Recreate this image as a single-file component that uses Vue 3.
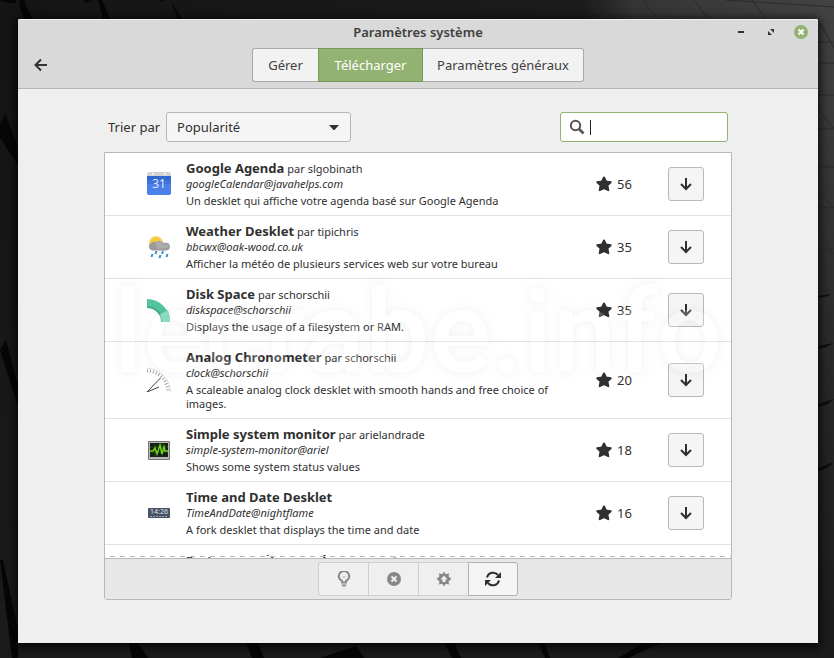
<script setup>
import { ref } from 'vue'

const tabs = [
  { label: 'Gérer', size: 'small' },
  { label: 'Télécharger', size: 'medium' },
  { label: 'Paramètres généraux', size: 'large' }
]
const activeTab = ref('Télécharger')
const sort = ref('Popularité')
const query = ref('')

const desklets = [
  { icon: 'calendar', name: 'Google Agenda', author: 'slgobinath', id: 'googleCalendar@javahelps.com', text: 'Un desklet qui affiche votre agenda basé sur Google Agenda', score: 56 },
  { icon: 'weather', name: 'Weather Desklet', author: 'tipichris', id: 'bbcwx@oak-wood.co.uk', text: 'Afficher la météo de plusieurs services web sur votre bureau', score: 35 },
  { icon: 'disk', name: 'Disk Space', author: 'schorschii', id: 'diskspace@schorschii', text: 'Displays the usage of a filesystem or RAM.', score: 35 },
  { icon: 'clock', name: 'Analog Chronometer', author: 'schorschii', id: 'clock@schorschii', text: 'A scaleable analog clock desklet with smooth hands and free choice of images.', score: 20 },
  { icon: 'monitor', name: 'Simple system monitor', author: 'arielandrade', id: 'simple-system-monitor@ariel', text: 'Shows some system status values', score: 18 },
  { icon: 'time', name: 'Time and Date Desklet', author: '', id: 'TimeAndDate@nightflame', text: 'A fork desklet that displays the time and date', score: 16 },
  { icon: '', name: 'System monitor graph', author: 'rcassani', id: 'system-monitor-graph@rcassani', text: 'Graphs for system variables', score: 15 }
]
</script>

<template>
  <div class="desktop">
    <svg class="wallpaper" viewBox="0 0 834 658" preserveAspectRatio="none" aria-hidden="true">
      <defs>
        <linearGradient id="sky" x1="0" y1="0" x2="1" y2="0">
          <stop offset="0" stop-color="#141414" />
          <stop offset="0.7" stop-color="#1b1b1b" />
          <stop offset="0.76" stop-color="#343434" />
          <stop offset="1" stop-color="#434343" />
        </linearGradient>
        <linearGradient id="fade" x1="0" y1="0" x2="0" y2="1">
          <stop offset="0" stop-color="#1a1a1a" stop-opacity="0" />
          <stop offset="0.6" stop-color="#1a1a1a" stop-opacity="0.7" />
          <stop offset="1" stop-color="#1b1b1b" />
        </linearGradient>
      </defs>
      <rect width="834" height="658" fill="url(#sky)" />
      <rect width="834" height="658" fill="url(#fade)" />
      <g fill="#060606">
        <path d="M0 0h16v3H8zM20 0h4l8 19h-8l-5-16zM84 0h8l-6 3zM98 0h4l8 19h-7zM160 0h5l-3 2zM171 2l11 17h-4z" />
        <path d="M0 124l5-10 18 44v14L0 138zM0 350l6-10 16 60v18zM0 560h3l15 70v28h-6z" />
        <path d="M128 640h8l12 18h-16zM245 640h12l7 18h-12zM320 658l36-12 8 12zM443 640h10l8 18h-9zM537 640h6l7 18h-5zM618 658l30-18h20l-40 18z" />
      </g>
      <g fill="#0d0d0d">
        <path d="M818 296l13-2-3 2-10 2zM818 346l16-3-8 4-8 2zM818 404l16-5-6 5-10 3zM818 468l16-6-7 6-9 3z" />
      </g>
      <g stroke="#2b2b2b" stroke-width="1" fill="none">
        <path d="M590 0l14 19M643 0l14 19M694 0l14 19M752 0l14 19M725 0l109 7M818 42h16M818 63h16M818 95h16M818 20l16 28M818 129h16M818 167h16M818 208l16-1M818 251l16-2M818 110l16 18M818 190l16 18M818 236l16 18" />
      </g>
    </svg>

    <main class="window">
      <header class="header">
        <div class="titlebar">
          <h1>Paramètres système</h1>
          <div class="controls">
            <button aria-label="Réduire">
              <svg width="14" height="14" viewBox="0 0 14 14"><path d="M4 6h6v2H4z" fill="#333" /></svg>
            </button>
            <button aria-label="Agrandir">
              <svg width="14" height="14" viewBox="0 0 14 14"><path d="M6 4h4v4zM4 6v4h4z" fill="#333" /><path d="M5 4l5 5" stroke="#d9d9d9" /></svg>
            </button>
            <button aria-label="Fermer">
              <svg width="14" height="14" viewBox="0 0 14 14"><circle cx="7" cy="7" r="7" fill="#92b372" /><path d="M4.500 4.500l5 5m0-5l-5 5" stroke="#fff" stroke-width="2" /></svg>
            </button>
          </div>
        </div>
        <div class="navbar">
          <button class="back" aria-label="Retour">
            <svg width="14" height="14" viewBox="0 0 14 14" fill="none" stroke="#333" stroke-width="2"><path d="M13 7H2M7 1.500L1.500 7 7 12.500" /></svg>
          </button>
          <nav class="tabs">
            <button
              v-for="tab in tabs"
              :key="tab.label"
              :class="[tab.size, { active: tab.label === activeTab }]"
              @click="activeTab = tab.label"
            >{{ tab.label }}</button>
          </nav>
        </div>
      </header>

      <section class="content">
        <div class="filters">
          <label for="sort">Trier par</label>
          <div class="picker">
            <select id="sort" v-model="sort">
              <option>Popularité</option>
              <option>Nom</option>
              <option>Date</option>
            </select>
            <svg class="chevron" width="10" height="6" viewBox="0 0 10 6"><path d="M0 0h10L5.500 5h-1z" fill="#303030" /></svg>
          </div>
          <label class="search">
            <svg width="16" height="16" viewBox="0 0 16 16" fill="none" stroke="#555"><circle cx="6.500" cy="6.500" r="4.700" stroke-width="2" /><path d="M10 10l4.500 4.500" stroke-width="2.600" /></svg>
            <span class="caret"></span>
            <input v-model="query" type="text" aria-label="Rechercher" />
          </label>
        </div>

        <div class="panel">
          <ul class="list">
            <li v-for="item in desklets" :key="item.id" class="row">
              <svg v-if="item.icon === 'calendar'" class="icon" viewBox="0 0 24 24">
                <rect y="0" width="24" height="8" rx="2" fill="#d2d4d4" />
                <path d="M5 1h2v2H5zM17 1h2v2h-2z" fill="#f4f4f4" />
                <path d="M0 4h24v17a2 2 0 0 1-2 2H2a2 2 0 0 1-2-2z" fill="#4a80e8" />
                <path d="M0 4h24v8H0z" fill="#3f72dc" />
                <path d="M0 4h24v4H0z" fill="#3367d0" />
                <text x="12" y="16" text-anchor="middle" font-size="12" fill="#dce8ff">31</text>
              </svg>
              <svg v-else-if="item.icon === 'weather'" class="icon" viewBox="0 0 24 24">
                <circle cx="9" cy="8" r="7" fill="#f6d878" />
                <circle cx="9" cy="8" r="6" fill="#f9cb38" />
                <path d="M5 15.500a4 4 0 0 1-1-7.500 5 5 0 0 1 5-1 6 6 0 0 1 8 1c4-1 6 1 6 3.500s-2 4-4 4z" fill="#9b9b9b" />
                <path d="M8 7c4-2 8 0 9 3 3-2 6-1 6 2-5 2-9 1-13 2z" fill="#ababab" />
                <path d="M9.500 16l-1 3M16 16l-1 3M5.500 19l-1 3M13.500 20l-1 3M20.500 19l-1 3" stroke="#3792c8" stroke-width="2" />
              </svg>
              <svg v-else-if="item.icon === 'disk'" class="icon" viewBox="0 0 24 24">
                <path d="M0 1a23 23 0 0 1 23 23h-8A15 15 0 0 0 0 9z" fill="#53c49d" />
                <path d="M0 8a16 16 0 0 1 16 16h-2A14 14 0 0 0 0 10z" fill="#41ac87" />
                <path d="M13 16l8-4a23 23 0 0 1 2 12h-8a15 15 0 0 0-2-8z" fill="#6ed0af" />
              </svg>
              <svg v-else-if="item.icon === 'clock'" class="icon" viewBox="0 0 24 24" fill="none">
                <path d="M0 .5A23.500 23.500 0 0 1 23.500 24" stroke="#ddd" stroke-width="1" />
                <path d="M0 3a21 21 0 0 1 21 21" stroke="#98a3a5" stroke-width="3" stroke-dasharray="1 2" />
                <path d="M0 24L13.500 10M0 24l12-5" stroke="#444" stroke-width="1" />
              </svg>
              <svg v-else-if="item.icon === 'monitor'" class="icon" viewBox="0 0 24 24">
                <rect x="1" y="3" width="22" height="19" rx="1" fill="#777" />
                <rect x="2" y="4" width="20" height="17" fill="#b9b9b5" />
                <rect x="3" y="5" width="18" height="14" fill="#142014" />
                <path d="M3 9h18M3 14h18M8 5v14M15 5v14" stroke="#254b1b" />
                <path d="M3 13h3l2-3 2 6 3-9 2 9 2-7 1 4h3" fill="none" stroke="#72d01c" stroke-width="1.500" />
              </svg>
              <svg v-else-if="item.icon === 'time'" class="icon" viewBox="0 0 24 24">
                <rect x="1" y="7" width="22" height="10" rx="1" fill="#465163" />
                <text x="12" y="13" text-anchor="middle" font-size="7" fill="#e2e5ea">14:26</text>
                <path d="M3 15.500h18" stroke="#a0a7b2" stroke-dasharray="2 1" stroke-width="1" />
              </svg>
              <span v-else class="icon"></span>

              <div class="info">
                <p class="heading"><strong>{{ item.name }}</strong><span v-if="item.author">par {{ item.author }}</span></p>
                <p class="uuid">{{ item.id }}</p>
                <p class="text">{{ item.text }}</p>
              </div>

              <div class="score">
                <svg width="16" height="16" viewBox="0 0 16 16"><path d="M8 1.500l2 4 4.700.7-3.300 3.200.9 4.800L8 12.200l-4.300 2 .9-4.800L1.300 6.200 6 5.500z" fill="#303030" stroke="#303030" stroke-width="2" stroke-linejoin="round" /></svg>
                <span>{{ item.score }}</span>
              </div>
              <button class="get" :aria-label="'Installer ' + item.name">
                <svg width="14" height="14" viewBox="0 0 14 14" fill="none" stroke="#303030" stroke-width="2"><path d="M7 1v11M2 7l5 5 5-5" /></svg>
              </button>
            </li>
          </ul>

          <div class="actions">
            <div class="group">
              <button disabled aria-label="À propos">
                <svg width="16" height="16" viewBox="0 0 16 16"><path d="M6 11.500V10a5.200 5.200 0 1 1 4 0v1.500z" fill="none" stroke="#888" stroke-width="2" /><path d="M6 5l2 3 2-3z" fill="#ccc" /><path d="M5.500 13.500h5l-1 2h-3z" fill="#888" /></svg>
              </button>
              <button disabled aria-label="Désinstaller">
                <svg width="16" height="16" viewBox="0 0 16 16"><circle cx="8" cy="8" r="7" fill="#888" /><path d="M5.500 5.500l5 5m0-5l-5 5" stroke="#f0f0f0" stroke-width="2" /></svg>
              </button>
              <button disabled aria-label="Mettre à jour">
                <svg width="16" height="16" viewBox="0 0 16 16"><path fill-rule="evenodd" d="M8 .5l1.700 2.700 3.400-1-.5 3.300L15.500 8l-2.900 2.200.5 3.400-3.400-.9L8 15.500l-1.700-2.800-3.400.9.5-3.400L.5 8l2.900-2.500-.5-3.300 3.400 1zM8 4.500L4.500 8.500h2v2.500h3V8.500h2z" fill="#888" /></svg>
              </button>
              <button class="refresh" aria-label="Actualiser">
                <svg width="18" height="16" viewBox="0 0 18 16" fill="none" stroke="#303030" stroke-width="2"><path d="M3 6.500A6.300 6.300 0 0 1 14 4M15 9.500A6.300 6.300 0 0 1 4 12" /><path d="M17 1v6h-6zM1 15V9h6z" fill="#303030" stroke="none" /></svg>
              </button>
            </div>
          </div>
        </div>
      </section>
      <div class="watermark">lecrabe.info</div>
    </main>
  </div>
</template>

<style>
body {
  margin: 0;
  background: #181818;
}
</style>

<style scoped>
* {
  box-sizing: border-box;
}
.desktop {
  position: relative;
  display: flex;
  height: 100vh;
  padding: 19px 16px 15px 18px;
  font-family: "Noto Sans", "Open Sans", sans-serif;
  font-size: 13px;
  line-height: 18px;
  color: #303030;
}
.wallpaper {
  position: absolute;
  inset: 0;
  width: 100%;
  height: 100%;
}
.window {
  position: relative;
  flex: 1;
  display: flex;
  flex-direction: column;
  min-width: 0;
  background: #efefef;
  border-radius: 2px 2px 0 0;
  box-shadow: 0 2px 10px 2px rgba(0, 0, 0, 0.8);
}
button {
  display: flex;
  align-items: center;
  justify-content: center;
  margin: 0;
  padding: 0;
  border: 0;
  background: none;
  font: inherit;
  color: inherit;
}
.header {
  background: #d9d9d9;
  border-top: 1px solid #f2f2f2;
  border-bottom: 1px solid #b4b4b4;
  border-radius: 2px 2px 0 0;
  color: #404040;
}
.titlebar {
  display: grid;
  grid-template-columns: 1fr auto 1fr;
  align-items: center;
  height: 24px;
  padding: 0 10px;
}
h1 {
  grid-column: 2;
  margin: 0;
  font-size: 13px;
  line-height: 24px;
  font-weight: 600;
}
.controls {
  display: flex;
  justify-content: flex-end;
  gap: 16px;
}
.navbar {
  display: grid;
  grid-template-columns: 1fr auto 1fr;
  align-items: center;
  padding: 4px 16px 6px;
}
.back {
  justify-self: start;
}
.tabs {
  display: flex;
}
.tabs button {
  height: 34px;
  background: #f2f2f2;
  border: 1px solid #a9a9a9;
  border-left-width: 0;
}
.tabs .small {
  width: 66px;
  border-left-width: 1px;
  border-right-width: 0;
  border-radius: 3px 0 0 3px;
}
.tabs .medium {
  width: 105px;
}
.tabs .large {
  width: 161px;
  border-radius: 0 3px 3px 0;
}
.tabs .active {
  background: #92b372;
  border-color: #78995a;
  border-left-width: 1px;
  color: #fff;
}
.content {
  flex: 1;
  display: flex;
  flex-direction: column;
  gap: 10px;
  min-height: 0;
  padding: 23px 86px 43px;
}
.filters {
  display: flex;
  align-items: center;
  gap: 6px;
  padding: 0 4px;
}
.picker {
  position: relative;
  width: 185px;
}
select {
  appearance: none;
  display: block;
  width: 100%;
  height: 30px;
  padding: 0 10px;
  border: 1px solid #b8b8b8;
  border-radius: 3px;
  background: #f5f5f5;
  font: inherit;
  color: inherit;
}
.chevron {
  position: absolute;
  right: 12px;
  top: 13px;
  pointer-events: none;
}
.search {
  display: flex;
  align-items: center;
  width: 168px;
  height: 30px;
  margin-left: auto;
  padding: 0 8px;
  border: 1px solid #92b372;
  border-radius: 3px;
  background: #fff;
}
.caret {
  width: 1px;
  height: 15px;
  margin-left: 5px;
  background: #222;
}
.search input {
  flex: 1;
  min-width: 0;
  padding: 0;
  border: 0;
  outline: 0;
  background: none;
  font: inherit;
}
.panel {
  flex: 1;
  display: flex;
  flex-direction: column;
  min-height: 0;
  overflow: hidden;
  border: 1px solid #b8b8b8;
  border-radius: 0 0 3px 3px;
  background: #fff;
}
.list {
  position: relative;
  flex: 1;
  min-height: 0;
  margin: 0;
  padding: 0;
  overflow: hidden;
  list-style: none;
}
.list::after {
  content: "";
  position: absolute;
  left: 0;
  right: 0;
  bottom: 1px;
  height: 1px;
  background: repeating-linear-gradient(90deg, #fff 0 5px, #b8b8b8 5px 10px);
}
.row {
  display: flex;
  align-items: center;
  padding: 7px 27px 7px 42px;
  border-bottom: 1px solid #e1e1e1;
}
.icon {
  flex: none;
  width: 24px;
  height: 24px;
  margin-right: 15px;
}
.info {
  flex: 1;
  min-width: 0;
  padding-right: 44px;
  font-size: 11px;
}
.info p {
  margin: 0;
}
.heading {
  display: flex;
  align-items: baseline;
  gap: 3px;
  height: 16px;
  line-height: 16px;
}
.heading strong {
  font-size: 13px;
}
.uuid {
  line-height: 16px;
  font-style: italic;
}
.info .text {
  margin-top: 2px;
  line-height: 14px;
}
.score {
  display: flex;
  align-items: center;
  gap: 5px;
  width: 72px;
}
.get {
  flex: none;
  width: 36px;
  height: 34px;
  border: 1px solid #b8b8b8;
  border-radius: 3px;
  background: #f5f5f5;
}
.actions {
  display: flex;
  justify-content: center;
  padding: 3px;
  border-top: 1px solid #b8b8b8;
  background: #e7e7e7;
}
.group {
  display: flex;
}
.group button {
  width: 50px;
  height: 34px;
  border: 1px solid #cfcfcf;
  border-right-width: 0;
  background: #efefef;
}
.group button:first-child {
  border-radius: 3px 0 0 3px;
}
.group .refresh {
  border: 1px solid #b0b0b0;
  border-radius: 0 3px 3px 0;
  background: #f5f5f5;
}
.watermark {
  position: absolute;
  top: 254px;
  left: 0;
  right: 0;
  text-align: center;
  font-family: Roboto, sans-serif;
  font-size: 115px;
  line-height: 120px;
  font-weight: 500;
  color: #fff;
  text-shadow: 0 0 10px rgba(0, 0, 0, 0.25);
  opacity: 0.2;
  pointer-events: none;
}
</style>
